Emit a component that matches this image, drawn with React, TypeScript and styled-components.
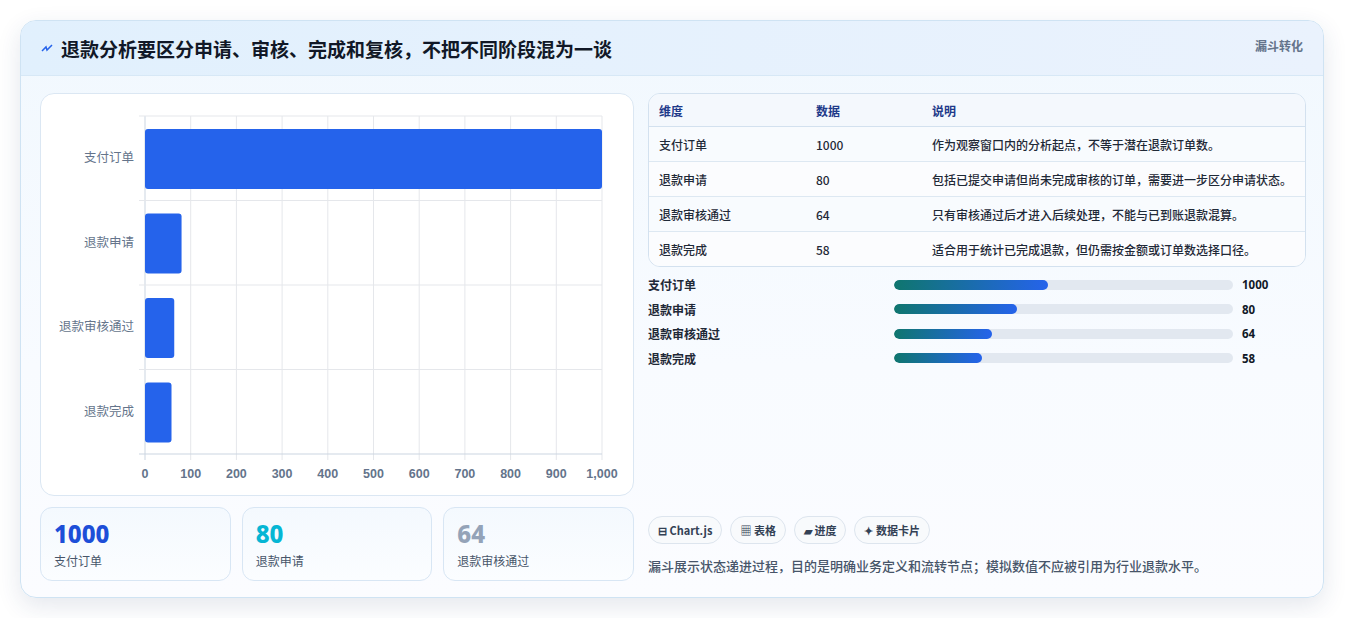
import React from "react";
import styled, { createGlobalStyle } from "styled-components";

const G = createGlobalStyle`
  body { margin:0; background:#fff; font-family:"Noto Sans CJK SC","Noto Sans",sans-serif; }
`;
const Card = styled.div`
  margin:20px; width:1304px; height:578px; box-sizing:border-box;
  border:1px solid #cfe3f3; border-radius:16px; overflow:hidden;
  background:linear-gradient(180deg,#f1f8fe 0%,#f8fbff 60%,#fbfcff 100%);
  box-shadow:0 8px 24px rgba(30,60,110,0.12);
`;
const Header = styled.div`
  height:55px; box-sizing:border-box; display:flex; align-items:center; justify-content:space-between;
  padding:0 20px 0 20px; border-bottom:1px solid #d7e8f6;
  background:linear-gradient(90deg,#e1f0fd,#eaf2fd);
`;
const Title = styled.h1`
  margin:0; font-size:19px; font-weight:700; color:#111827; display:flex; align-items:center; gap:8px;
`;
const Tag = styled.span`font-size:12px; font-weight:700; color:#64748b; align-self:flex-start; margin-top:16px;`;
const Body = styled.div`
  display:grid; grid-template-columns:594px 1fr; gap:14px; padding:17px 17px 0 19px; height:505px; box-sizing:border-box;
`;
const Left = styled.div`display:flex; flex-direction:column; gap:11px;`;
const ChartPanel = styled.div`
  height:403px; box-sizing:border-box; border:1px solid #dbe7f3; border-radius:14px; background:#fff;
`;
const Stats = styled.div`display:grid; grid-template-columns:repeat(3,1fr); gap:11px;`;
const Stat = styled.div`
  height:74px; box-sizing:border-box; border:1px solid #d8e6f4; border-radius:12px; padding:12px 13px;
  background:linear-gradient(180deg,#f4f9fe,#fbfdff);
`;
const StatNum = styled.div<{ c: string }>`font-size:24px; font-weight:800; color:${p => p.c}; line-height:28px; font-family:"Noto Sans",sans-serif;`;
const StatLbl = styled.div`font-size:12px; color:#475569; margin-top:4px;`;
const Right = styled.div`display:flex; flex-direction:column;`;
const Table = styled.table`
  width:100%; border-collapse:separate; border-spacing:0; border:1px solid #d3e1ef; border-radius:12px; overflow:hidden;
  font-size:12px; background:#f8fbfe;
  th { text-align:left; color:#1e3a8a; font-weight:700; height:32px; padding:0 10px; border-bottom:1px solid #d3e1ef; background:#f4f8fd; }
  td { height:34px; padding:0 10px; color:#1f2937; font-weight:500; border-bottom:1px solid #dde8f2; }
  tr:nth-child(even) td { background:#fbfcfe; }
  tr:last-child td { border-bottom:none; }
`;
const Bars = styled.div`display:flex; flex-direction:column; gap:7.5px; margin-top:9px;`;
const BarRow = styled.div`display:grid; grid-template-columns:237px 339px 1fr; align-items:center; column-gap:9px; height:17px; font-size:12px; font-weight:600; color:#1f2937;`;
const Track = styled.div`height:10px; border-radius:5px; background:#e2e8f0; overflow:hidden;`;
const Fill = styled.div`height:100%; border-radius:5px; background:linear-gradient(90deg,#0f766e,#2563eb);`;
const Val = styled.span`font-weight:700; color:#111827; font-family:"Noto Sans",sans-serif; font-size:11.5px;`;
const Chips = styled.div`display:flex; gap:8px; margin-top:auto;`;
const Chip = styled.span`
  height:28px; box-sizing:border-box; padding:0 9px; border:1px solid #dde5ee; border-radius:14px; background:#f8fafc;
  display:inline-flex; align-items:center; gap:4px; font-size:11px; font-weight:700; color:#334155;
`;
const Note = styled.p`margin:12px 0 6px; font-size:13px; color:#475569; font-weight:500;`;

const cats = ["支付订单", "退款申请", "退款审核通过", "退款完成"];
const vals = [1000, 80, 64, 58];

function Chart() {
  const x0 = 104, x1 = 561, y0 = 22, y1 = 360, band = (y1 - y0) / 4;
  const sx = (v: number) => x0 + (v / 1000) * (x1 - x0);
  return (
    <svg width="592" height="401" style={{ display: "block" }}>
      {Array.from({ length: 11 }, (_, i) => (
        <g key={i}>
          <line x1={sx(i * 100)} x2={sx(i * 100)} y1={y0} y2={y1 + 6} stroke={i === 0 ? "#cbd5e1" : "#e5e7eb"} />
          <text x={sx(i * 100)} y={384} textAnchor="middle" fontSize="12.5" fill="#64748b" fontFamily="Liberation Sans, sans-serif" fontWeight="600">
            {(i * 100).toLocaleString("en-US")}
          </text>
        </g>
      ))}
      {[0, 1, 2, 3].map(i => (
        <line key={"h" + i} x1={x0 - 6} x2={x1} y1={y0 + i * band} y2={y0 + i * band} stroke="#e5e7eb" />
      ))}
      <line x1={x0 - 6} x2={x1} y1={y1} y2={y1} stroke="#cbd5e1" />
      {cats.map((c, i) => (
        <g key={c}>
          <rect x={x0} y={y0 + i * band + 13} width={sx(vals[i]) - x0} height={60} rx={3} fill="#2563eb" />
          <text x={x0 - 11} y={y0 + i * band + band / 2 + 4} textAnchor="end" fontSize="12.5" fill="#64748b">{c}</text>
        </g>
      ))}
    </svg>
  );
}

export default function App() {
  const rows = [
    ["支付订单", "1000", "作为观察窗口内的分析起点，不等于潜在退款订单数。"],
    ["退款申请", "80", "包括已提交申请但尚未完成审核的订单，需要进一步区分申请状态。"],
    ["退款审核通过", "64", "只有审核通过后才进入后续处理，不能与已到账退款混算。"],
    ["退款完成", "58", "适合用于统计已完成退款，但仍需按金额或订单数选择口径。"],
  ];
  const pct = [45.5, 36.3, 29, 26];
  return (
    <>
      <G />
      <Card>
        <Header>
          <Title>
            <svg width="12" height="12" viewBox="0 0 12 12"><path d="M1 9 L5 5 L6 8 L11 3" stroke="#2563eb" strokeWidth="1.5" fill="none" /></svg>
            退款分析要区分申请、审核、完成和复核，不把不同阶段混为一谈
          </Title>
          <Tag>漏斗转化</Tag>
        </Header>
        <Body>
          <Left>
            <ChartPanel><Chart /></ChartPanel>
            <Stats>
              <Stat><StatNum c="#1d4ed8">1000</StatNum><StatLbl>支付订单</StatLbl></Stat>
              <Stat><StatNum c="#06b6d4">80</StatNum><StatLbl>退款申请</StatLbl></Stat>
              <Stat><StatNum c="#94a3b8">64</StatNum><StatLbl>退款审核通过</StatLbl></Stat>
            </Stats>
          </Left>
          <Right>
            <Table>
              <colgroup><col style={{ width: 157 }} /><col style={{ width: 116 }} /><col /></colgroup>
              <thead><tr><th>维度</th><th>数据</th><th>说明</th></tr></thead>
              <tbody>
                {rows.map(r => <tr key={r[0]}><td>{r[0]}</td><td>{r[1]}</td><td>{r[2]}</td></tr>)}
              </tbody>
            </Table>
            <Bars>
              {cats.map((c, i) => (
                <BarRow key={c}>
                  <span>{c}</span>
                  <Track><Fill style={{ width: pct[i] + "%" }} /></Track>
                  <Val>{vals[i]}</Val>
                </BarRow>
              ))}
            </Bars>
            <Chips>
              <Chip>⊟ Chart.js</Chip>
              <Chip>▦ 表格</Chip>
              <Chip>▰ 进度</Chip>
              <Chip>✦ 数据卡片</Chip>
            </Chips>
            <Note>漏斗展示状态递进过程，目的是明确业务定义和流转节点；模拟数值不应被引用为行业退款水平。</Note>
          </Right>
        </Body>
      </Card>
    </>
  );
}
